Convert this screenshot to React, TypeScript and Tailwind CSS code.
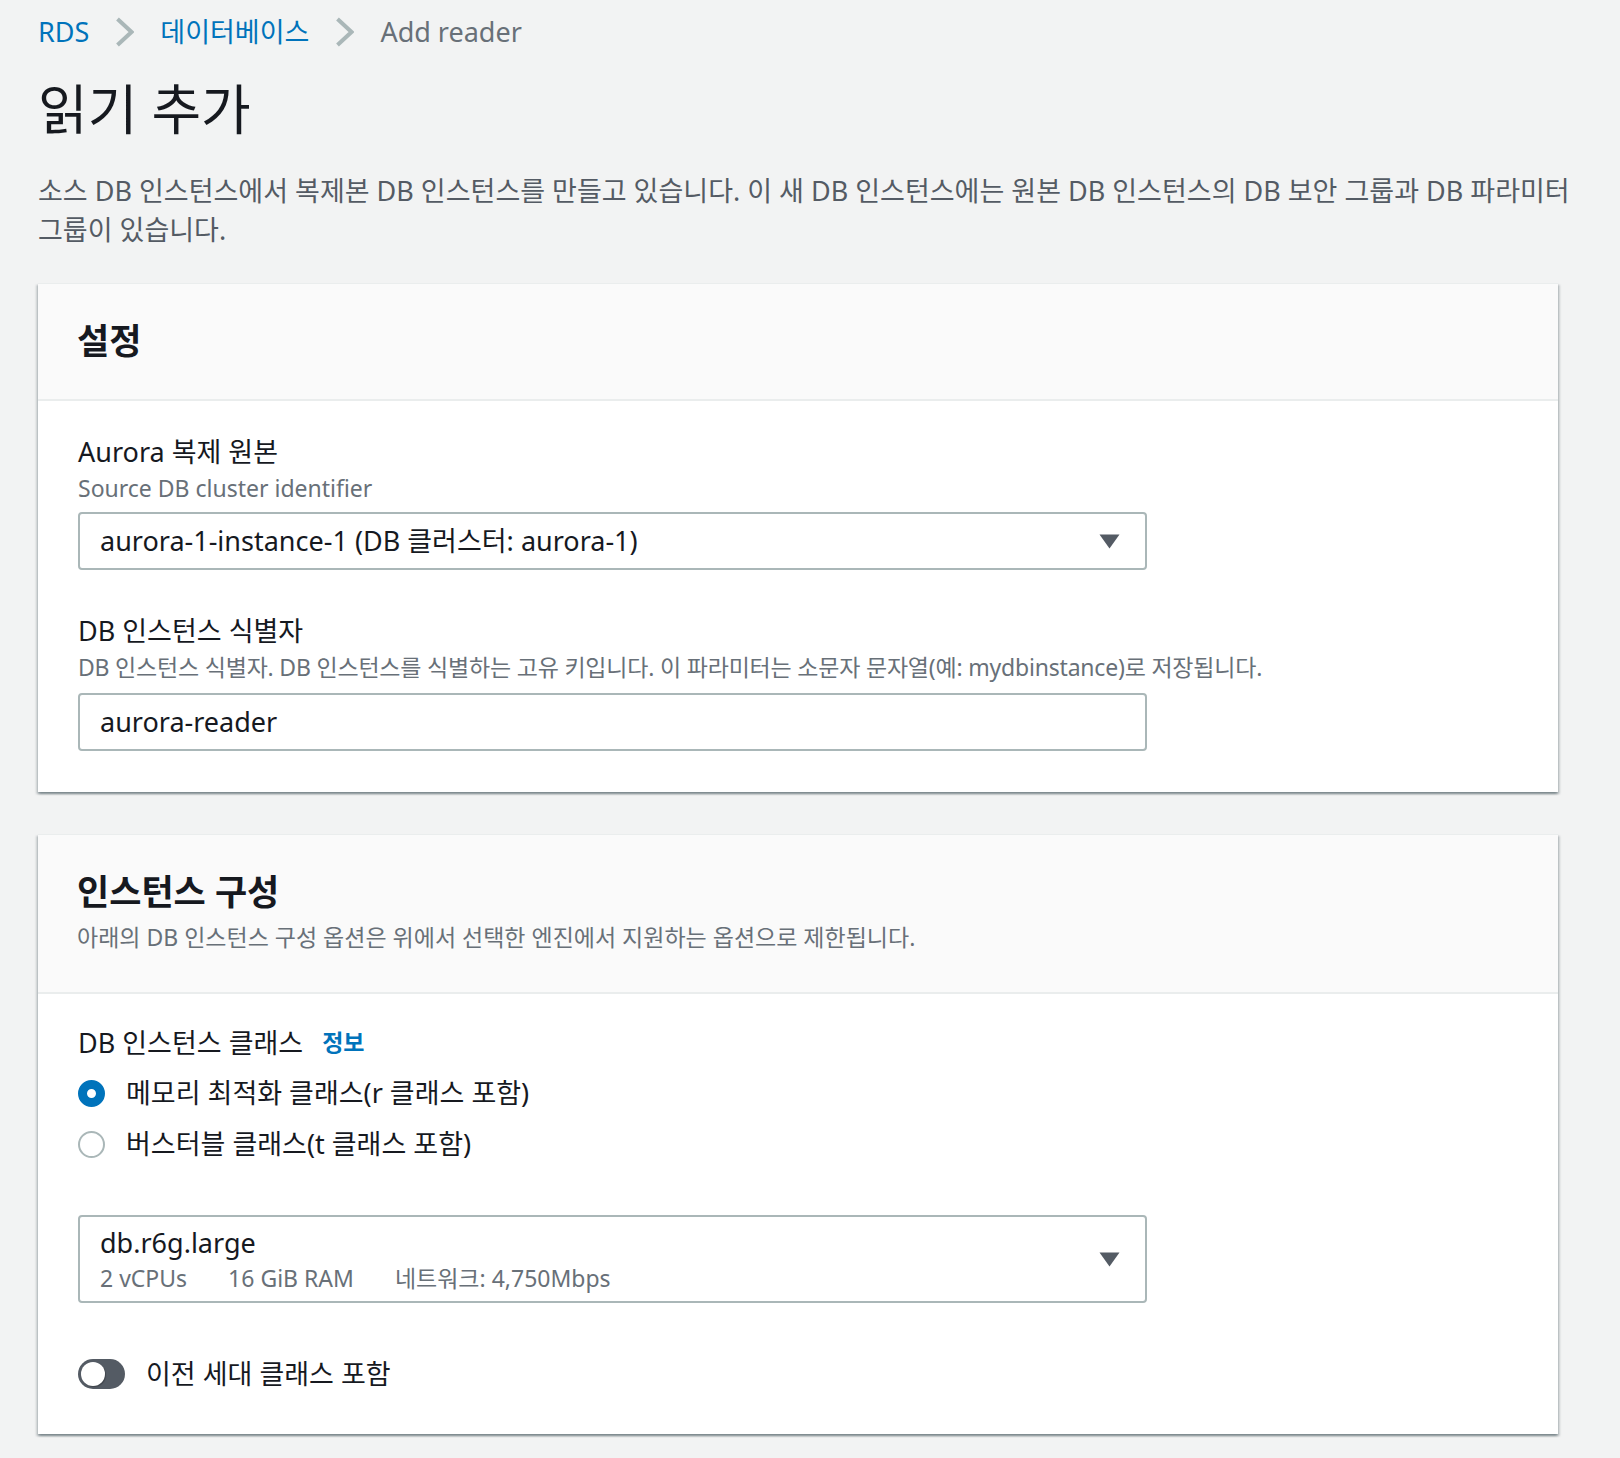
import React from "react";

const FONT = "font-['Noto_Sans','Noto_Sans_CJK_KR',sans-serif]";

const Chevron = () => (
  <svg width="19" height="30" viewBox="0 0 19 30" className="shrink-0">
    <path d="M2.5 2 L16.5 15 L2.5 28" fill="none" stroke="#aab7b8" strokeWidth="4" />
  </svg>
);

const Caret = () => (
  <svg width="21" height="15" viewBox="0 0 21 15" className="shrink-0">
    <path d="M0.5 0.5 H20.5 L10.5 14.5 Z" fill="#545b64" />
  </svg>
);

const Card = ({
  title,
  subtitle,
  children,
}: {
  title: string;
  subtitle?: string;
  children: React.ReactNode;
}) => (
  <section className="w-[1520px] bg-white border-t border-[#eaeded] shadow-[0_2px_2px_0_rgba(0,28,36,0.3),2px_2px_2px_0_rgba(0,28,36,0.15),-2px_2px_2px_0_rgba(0,28,36,0.15)]">
    <div className="bg-[#fafafa] border-b-2 border-[#eaeded] px-[39px] pt-[35px] pb-[37px]">
      <h2 className="text-[35px] leading-[43px] font-bold text-[#16191f]">{title}</h2>
      {subtitle && (
        <p className="mt-[7px] text-[23px] leading-[35px] text-[#687078]">{subtitle}</p>
      )}
    </div>
    {children}
  </section>
);

export default function App() {
  return (
    <div className={`${FONT} min-h-[1458px] bg-[#f2f3f3] pl-[38px] pt-[12px] pb-[25px]`}>
      {/* breadcrumb */}
      <nav className="flex items-center gap-[26px] text-[27px] leading-[39px]">
        <span className="text-[#0073bb]">RDS</span>
        <Chevron />
        <span className="text-[#0073bb]">데이터베이스</span>
        <Chevron />
        <span className="text-[#687078]">Add reader</span>
      </nav>

      <h1 className="mt-[26px] text-[54px] leading-[65px] text-[#16191f]">읽기 추가</h1>

      <p className="mt-[29px] w-[1560px] break-keep text-[27px] leading-[39px] text-[#545b64]">
        소스 DB 인스턴스에서 복제본 DB 인스턴스를 만들고 있습니다. 이 새 DB 인스턴스에는 원본 DB 인스턴스의 DB 보안 그룹과 DB 파라미터 그룹이 있습니다.
      </p>

      <div className="mt-[34px] flex flex-col gap-[42px]">
        <Card title="설정">
          <div className="px-[40px] pt-[31px] pb-[41px]">
            <div className="text-[27px] leading-[39px] text-[#16191f]">Aurora 복제 원본</div>
            <div className="text-[23px] leading-[35px] text-[#687078]">Source DB cluster identifier</div>
            <div className="mt-[6px] w-[1069px] h-[58px] flex items-center justify-between border-2 border-[#aab7b8] rounded-[4px] pl-[20px] pr-[25px]">
              <span className="text-[27px] text-[#16191f]">aurora-1-instance-1 (DB 클러스터: aurora-1)</span>
              <Caret />
            </div>

            <div className="mt-[41px] text-[27px] leading-[39px] text-[#16191f]">DB 인스턴스 식별자</div>
            <div className="text-[23px] leading-[35px] tracking-[-0.2px] text-[#687078]">
              DB 인스턴스 식별자. DB 인스턴스를 식별하는 고유 키입니다. 이 파라미터는 소문자 문자열(예: mydbinstance)로 저장됩니다.
            </div>
            <div className="mt-[8px] w-[1069px] h-[58px] flex items-center border-2 border-[#aab7b8] rounded-[4px] pl-[20px]">
              <span className="text-[27px] text-[#16191f]">aurora-reader</span>
            </div>
          </div>
        </Card>

        <Card title="인스턴스 구성" subtitle="아래의 DB 인스턴스 구성 옵션은 위에서 선택한 엔진에서 지원하는 옵션으로 제한됩니다.">
          <div className="px-[40px] pt-[29px] pb-[41px]">
            <div className="flex items-center gap-[19px]">
              <span className="text-[27px] leading-[39px] text-[#16191f]">DB 인스턴스 클래스</span>
              <span className="text-[23px] font-bold text-[#0073bb]">정보</span>
            </div>

            <div className="mt-[12px] flex flex-col gap-[12px]">
              <label className="flex items-center gap-[21px] h-[39px]">
                <span className="w-[27px] h-[27px] rounded-full border-[9px] border-[#0073bb] bg-white" />
                <span className="text-[27px] text-[#16191f]">메모리 최적화 클래스(r 클래스 포함)</span>
              </label>
              <label className="flex items-center gap-[21px] h-[39px]">
                <span className="w-[27px] h-[27px] rounded-full border-2 border-[#aab7b8] bg-white" />
                <span className="text-[27px] text-[#16191f]">버스터블 클래스(t 클래스 포함)</span>
              </label>
            </div>

            <div className="mt-[51px] w-[1069px] h-[88px] flex items-center justify-between border-2 border-[#aab7b8] rounded-[4px] pl-[20px] pr-[25px]">
              <div className="flex flex-col">
                <span className="text-[27px] leading-[37px] text-[#16191f]">db.r6g.large</span>
                <div className="flex gap-[41px] text-[23px] leading-[34px] text-[#687078]">
                  <span>2 vCPUs</span>
                  <span>16 GiB RAM</span>
                  <span>네트워크: 4,750Mbps</span>
                </div>
              </div>
              <Caret />
            </div>

            <div className="mt-[51px] flex items-center gap-[21px]">
              <span className="w-[47px] h-[30px] rounded-full bg-[#545b64] p-[3px] flex items-center">
                <span className="w-[24px] h-[24px] rounded-full bg-white shadow-[1px_1px_1px_rgba(0,0,0,0.25)]" />
              </span>
              <span className="text-[27px] leading-[39px] text-[#16191f]">이전 세대 클래스 포함</span>
            </div>
          </div>
        </Card>
      </div>
    </div>
  );
}
